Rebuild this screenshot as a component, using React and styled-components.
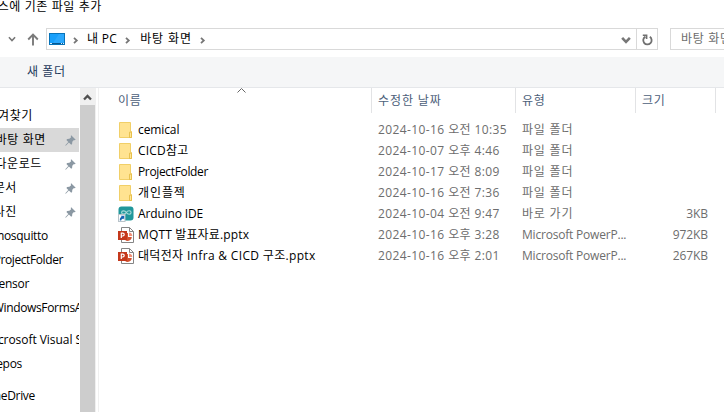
import React from "react";
import styled, { createGlobalStyle } from "styled-components";

const Global = createGlobalStyle`
  body { margin: 0; background: #fff; overflow: hidden; }
  * { box-sizing: border-box; }
`;

const Dialog = styled.div`
  width: 724px;
  height: 412px;
  overflow: hidden;
  display: flex;
  flex-direction: column;
  background: #fff;
  color: #000;
  font-family: "Open Sans", "Noto Sans CJK KR", sans-serif;
  font-size: 12px;
  line-height: 20px;
  white-space: pre;
`;

const Text = styled.span`
  flex: none;
  font-size: ${(p) => p.$size || 12}px;
  letter-spacing: ${(p) => p.$track || 0}px;
`;

const TitleBar = styled.header`
  height: 28px;
  width: 102px;
  display: flex;
  justify-content: flex-end;
  margin-top: -3px;
  margin-bottom: 3px;
`;

const AddressRow = styled.div`
  height: 22px;
  flex: none;
  display: flex;
  align-items: center;
`;

const NavButtons = styled.div`
  flex: none;
  width: 46px;
  height: 22px;
  display: flex;
  align-items: center;
  padding-left: 8px;
  gap: 11px;
`;

const AddressBox = styled.div`
  flex: none;
  width: 612px;
  height: 22px;
  display: flex;
  align-items: center;
  border: 1px solid #d9d9d9;
`;

const Crumbs = styled.div`
  flex: 1;
  display: flex;
  align-items: center;
  padding-left: 2px;
`;

const CrumbArrow = styled.div`
  flex: none;
  width: ${(p) => p.$w}px;
  height: 20px;
  padding-left: 7px;
  padding-top: 2px;
  display: flex;
  align-items: center;
`;

const BoxButton = styled.div`
  width: ${(p) => (p.$divided ? 21 : 20)}px;
  height: 20px;
  padding-top: 2px;
  display: flex;
  align-items: center;
  justify-content: center;
  border-left: ${(p) => (p.$divided ? "1px solid #d9d9d9" : "none")};
`;

const SearchBox = styled.div`
  flex: none;
  width: 80px;
  height: 22px;
  margin-left: 12px;
  padding-left: 10px;
  display: flex;
  align-items: center;
  border: 1px solid #d9d9d9;
  color: #6d6d6d;
`;

const Toolbar = styled.div`
  flex: none;
  height: 31px;
  margin-top: 7px;
  padding: 0 0 0 27px;
  display: flex;
  align-items: center;
  background: #f5f6f7;
  border-bottom: 1px solid #e5e7ea;
  color: #1e395b;
`;

const Body = styled.div`
  flex: 1;
  min-height: 0;
  display: flex;
`;

const Sidebar = styled.nav`
  width: 79px;
  flex: none;
  padding-top: 16px;
  overflow: hidden;
`;

const SideRow = styled.div`
  width: 79px;
  height: 24px;
  margin-top: ${(p) => (p.$gap ? 8 : 0)}px;
  display: flex;
  align-items: center;
  overflow: hidden;
  background: ${(p) => (p.$active ? "#d9d9d9" : "transparent")};
`;

const SideLabel = styled.div`
  width: ${(p) => p.$end}px;
  flex: none;
  display: flex;
  justify-content: flex-end;
`;

const PinSlot = styled.div`
  flex: 1;
  display: flex;
  justify-content: flex-end;
  padding-right: 3px;
`;

const Scrollbar = styled.div`
  flex: none;
  width: 16px;
  margin-left: 1px;
  background: #cdcdcd;
  border-right: 1px solid #f0f0f0;
`;

const ScrollUp = styled.div`
  height: 17px;
  padding-top: 1px;
  display: flex;
  align-items: center;
  justify-content: center;
  background: #f0f0f0;
`;

const FilePane = styled.main`
  flex: 1;
  min-width: 0;
  margin-left: 2px;
  border-left: 1px solid #f0f0f0;
`;

const columns = "273px 144px 120px 80px 1fr";

const HeaderRow = styled.div`
  position: relative;
  display: grid;
  grid-template-columns: ${columns};
  height: 25px;
  color: #4c607a;
`;

const HeaderCell = styled.div`
  padding-left: ${(p) => p.$pad}px;
  padding-top: 3px;
  border-right: ${(p) => (p.$last ? "none" : "1px solid #e2e3e5")};
`;

const SortMark = styled.div`
  position: absolute;
  left: 138px;
  top: 0;
  display: flex;
`;

const FileList = styled.div`
  padding-top: 6px;
`;

const FileRow = styled.div`
  display: grid;
  grid-template-columns: ${columns};
  height: 21px;
  align-items: center;
  color: #6d6d6d;
`;

const NameCell = styled.div`
  display: flex;
  align-items: center;
  padding-left: 19px;
  gap: 4px;
  color: #000;
`;

const Cell = styled.div`
  padding-left: 6px;
`;

const SizeCell = styled.div`
  display: flex;
  justify-content: flex-end;
  padding-right: 8px;
`;

const Icon = styled.svg`
  display: block;
  flex: none;
  overflow: visible;
`;

const Chevron = ({ dir = "down", size = 7, color = "#777", weight = 1.8 }) => {
  const paths = {
    down: "M.8 2 L3.5 4.8 L6.2 2",
    up: "M.8 5 L3.5 2.2 L6.2 5",
    right: "M2 .8 L4.8 3.5 L2 6.2",
  };
  return (
    <Icon width={size} height={size} viewBox="0 0 7 7">
      <path d={paths[dir]} fill="none" stroke={color} strokeWidth={weight} />
    </Icon>
  );
};

const UpArrow = () => (
  <Icon width="12" height="13" viewBox="0 0 12 13">
    <path d="M6 12.5V1.8M1.2 6.5 6 1.7l4.8 4.8" fill="none" stroke="#7a7a7a" strokeWidth="1.9" />
  </Icon>
);

const DesktopIcon = () => (
  <Icon width="16" height="12" viewBox="0 0 16 12">
    <rect x=".5" y=".5" width="15" height="11" fill="#18a0fb" stroke="#0873b8" />
    <path d="M10 1h5v9H4z" fill="#38adff" opacity=".6" />
    <path d="M1 10.5h14" stroke="#07578e" />
    <path d="M1 10.5h2M12 10.5h1M14 10.5h1" stroke="#d8efff" />
  </Icon>
);

const RefreshIcon = () => (
  <Icon width="11" height="12" viewBox="0 0 11 12">
    <path d="M3.4 2.6A4.2 4.2 0 1 0 7.8 2.8" fill="none" stroke="#707070" strokeWidth="1.8" />
    <path d="M.8 1.2H4.6V5" fill="none" stroke="#707070" strokeWidth="1.6" />
  </Icon>
);

const PinIcon = () => (
  <Icon width="11" height="11" viewBox="0 0 11 11">
    <path d="M6.2.3 10.7 4.8 9.6 5.3 8.9 5 7.3 6.8 7.1 9.1 6.2 9.7 3.9 7.5.8 10.7.3 10.2 3.3 6.9 1.4 4.9 2.2 3.9 4.4 3.8 6.1 2.2 5.7 1.1Z" fill="#8b98a3" />
  </Icon>
);

const FolderIcon = () => (
  <Icon width="16" height="16" viewBox="0 0 16 16">
    <path d="M1.5.5h11v9h1v6h-12z" fill="#ffe391" stroke="#efcb5c" strokeWidth=".9" />
    <path d="M11.5 10.2h2v5.3h-2z" fill="#ffe796" stroke="#e2b83f" strokeWidth=".8" />
  </Icon>
);

const ArduinoIcon = () => (
  <Icon width="16" height="16" viewBox="0 0 16 16">
    <rect x=".5" y=".5" width="15" height="14" rx="3" fill="#20979b" />
    <path d="M8.3 6.5C6.9 4.2 3.6 4.5 3.6 6.5s3.3 2.3 4.7 0 4.8-2.2 4.8 0-3.4 2.3-4.8 0Z" fill="none" stroke="#a9dada" strokeWidth="1.1" />
    <rect x=".5" y="8.5" width="6.5" height="7" fill="#fff" stroke="#b9c3c9" />
    <path d="M1.8 14.4c0-2.4.6-3 1.8-3.6l-1-1h3.6v3.6l-1-1c-1.200.5-1.800 1-2 2Z" fill="#1766b5" />
  </Icon>
);

const PowerPointIcon = () => (
  <Icon width="16" height="16" viewBox="0 0 16 16">
    <path d="M3.500.5h8l4 4v11h-12z" fill="#fff" stroke="#858585" />
    <path d="M11.500.5v4h4" fill="none" stroke="#858585" />
    <path d="M10 6a4 4 0 1 0 3.8 4H10z" fill="#d35230" />
    <path d="M11 5.4V9h3.300A3.700 3.700 0 0 0 11 5.4Z" fill="#f09078" />
    <rect x="0" y="4" width="9" height="9" fill="#c4381c" />
    <path d="M3.300 11V6.200h1.500a1.400 1.400 0 0 1 0 2.800H3.300" fill="none" stroke="#fff" strokeWidth="1.200" />
  </Icon>
);

const icons = { folder: FolderIcon, arduino: ArduinoIcon, pptx: PowerPointIcon };

const places = [
  { label: "즐겨찾기", end: 33 },
  { label: "바탕 화면", end: 46, pin: true, active: true },
  { label: "다운로드", end: 42, pin: true },
  { label: "문서", end: 17, pin: true },
  { label: "사진", end: 17, pin: true },
  { label: "mosquitto", end: 48, track: -0.3 },
  { label: "ProjectFolder", end: 63, track: -0.4 },
  { label: "sensor", end: 29, track: -0.3 },
  { label: "WindowsFormsA", end: 82, track: -0.35 },
  { label: "Microsoft Visual S", end: 82, track: -0.05, gap: true },
  { label: "repos", end: 22, track: -0.3 },
  { label: "OneDrive", end: 35, track: -0.3, gap: true },
];

const files = [
  { icon: "folder", name: "cemical", track: -0.1, date: "2024-10-16 오전 10:35", type: "파일 폴더" },
  { icon: "folder", name: "CICD참고", track: 0.2, date: "2024-10-07 오후 4:46", type: "파일 폴더" },
  { icon: "folder", name: "ProjectFolder", track: -0.35, date: "2024-10-17 오전 8:09", type: "파일 폴더" },
  { icon: "folder", name: "개인플젝", track: 0.9, date: "2024-10-16 오전 7:36", type: "파일 폴더" },
  { icon: "arduino", name: "Arduino IDE", track: -0.15, date: "2024-10-04 오전 9:47", type: "바로 가기", size: "3KB" },
  { icon: "pptx", name: "MQTT 발표자료.pptx", track: 0.15, date: "2024-10-16 오후 3:28", type: "Microsoft PowerP...", typeTrack: -0.2, size: "972KB" },
  { icon: "pptx", name: "대덕전자 Infra & CICD 구조.pptx", track: 0.33, date: "2024-10-16 오후 2:01", type: "Microsoft PowerP...", typeTrack: -0.2, size: "267KB" },
];

export default function App() {
  return (
    <>
      <Global />
      <Dialog>
        <TitleBar>
          <Text $track={0.6}>리소스에 기존 파일 추가</Text>
        </TitleBar>
        <AddressRow>
          <NavButtons>
            <Chevron weight={1.4} size={8} />
            <UpArrow />
          </NavButtons>
          <AddressBox>
            <Crumbs>
              <DesktopIcon />
              <CrumbArrow $w={22}><Chevron dir="right" /></CrumbArrow>
              <Text $track={0.3}>내 PC</Text>
              <CrumbArrow $w={23}><Chevron dir="right" /></CrumbArrow>
              <Text $track={0.9}>바탕 화면</Text>
              <CrumbArrow $w={22}><Chevron dir="right" /></CrumbArrow>
            </Crumbs>
            <BoxButton><Chevron size={10} /></BoxButton>
            <BoxButton $divided><RefreshIcon /></BoxButton>
          </AddressBox>
          <SearchBox><Text $track={0.7}>바탕 화면</Text></SearchBox>
        </AddressRow>
        <Toolbar><Text $track={0.6}>새 폴더</Text></Toolbar>
        <Body>
          <Sidebar>
            {places.map((p) => (
              <SideRow key={p.label} $gap={p.gap} $active={p.active}>
                <SideLabel $end={p.end}><Text $track={p.track ?? 0.6}>{p.label}</Text></SideLabel>
                {p.pin && <PinSlot><PinIcon /></PinSlot>}
              </SideRow>
            ))}
          </Sidebar>
          <Scrollbar>
            <ScrollUp><Chevron dir="up" size={9} color="#505050" /></ScrollUp>
          </Scrollbar>
          <FilePane>
            <HeaderRow>
              <HeaderCell $pad={19}><Text $track={0.6}>이름</Text></HeaderCell>
              <HeaderCell $pad={6}><Text $track={0.9}>수정한 날짜</Text></HeaderCell>
              <HeaderCell $pad={6}><Text $track={0.8}>유형</Text></HeaderCell>
              <HeaderCell $pad={6}><Text $track={0.8}>크기</Text></HeaderCell>
              <HeaderCell $last />
              <SortMark>
                <Icon width="9" height="5" viewBox="0 0 9 5">
                  <path d="M.5 4.5l4-4 4 4" fill="none" stroke="#666" />
                </Icon>
              </SortMark>
            </HeaderRow>
            <FileList>
              {files.map((f) => {
                const FileIcon = icons[f.icon];
                return (
                  <FileRow key={f.name}>
                    <NameCell><FileIcon /><Text $track={f.track}>{f.name}</Text></NameCell>
                    <Cell><Text $track={0.4}>{f.date}</Text></Cell>
                    <Cell><Text $track={f.typeTrack ?? 0.8}>{f.type}</Text></Cell>
                    <SizeCell><Text $track={-0.1}>{f.size}</Text></SizeCell>
                  </FileRow>
                );
              })}
            </FileList>
          </FilePane>
        </Body>
      </Dialog>
    </>
  );
}
